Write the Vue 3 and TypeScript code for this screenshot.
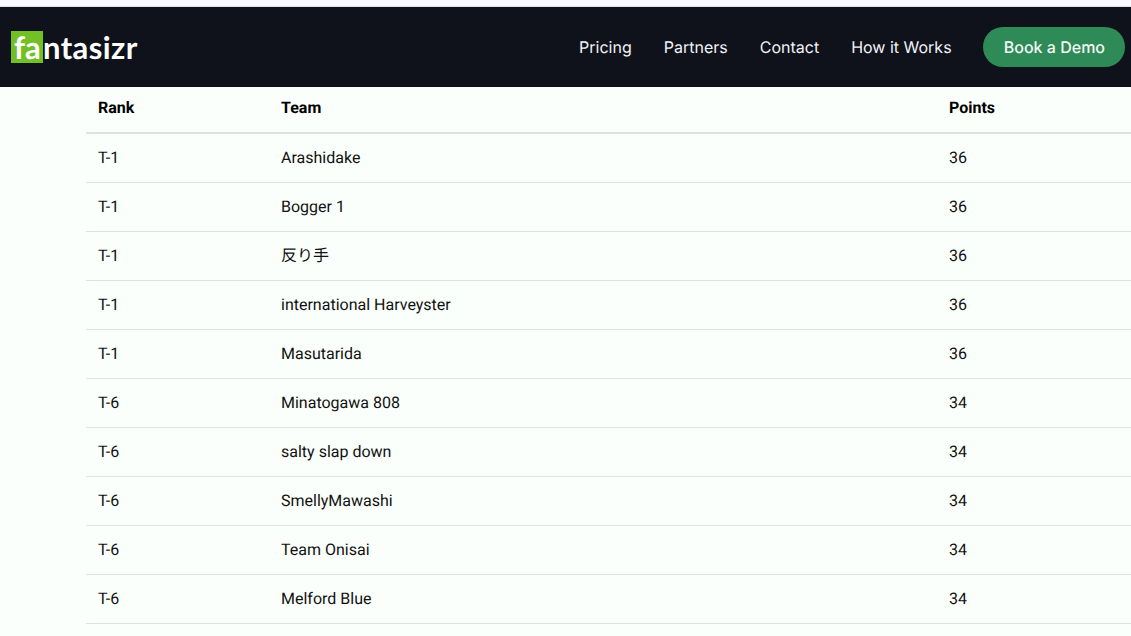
<script setup lang="ts">
interface Row { rank: string; team: string; points: number }
const links: string[] = ['Pricing', 'Partners', 'Contact', 'How it Works']
const rows: Row[] = [
  { rank: 'T-1', team: 'Arashidake', points: 36 },
  { rank: 'T-1', team: 'Bogger 1', points: 36 },
  { rank: 'T-1', team: '反り手', points: 36 },
  { rank: 'T-1', team: 'international Harveyster', points: 36 },
  { rank: 'T-1', team: 'Masutarida', points: 36 },
  { rank: 'T-6', team: 'Minatogawa 808', points: 34 },
  { rank: 'T-6', team: 'salty slap down', points: 34 },
  { rank: 'T-6', team: 'SmellyMawashi', points: 34 },
  { rank: 'T-6', team: 'Team Onisai', points: 34 },
  { rank: 'T-6', team: 'Melford Blue', points: 34 },
]
</script>

<template>
  <div class="page">
    <div class="topstrip"></div>
    <header class="nav">
      <div class="logo"><span class="logo-mark">fa</span><span>ntasizr</span></div>
      <nav class="links">
        <a v-for="l in links" :key="l" class="link">{{ l }}</a>
        <a class="cta">Book a Demo</a>
      </nav>
    </header>
    <main class="content">
      <table class="board">
        <colgroup>
          <col class="c1" />
          <col class="c2" />
          <col class="c3" />
        </colgroup>
        <thead>
          <tr><th>Rank</th><th>Team</th><th>Points</th></tr>
        </thead>
        <tbody>
          <tr v-for="(r, i) in rows" :key="i">
            <td>{{ r.rank }}</td>
            <td>{{ r.team }}</td>
            <td>{{ r.points }}</td>
          </tr>
        </tbody>
      </table>
    </main>
  </div>
</template>

<style>
html, body { margin: 0; overflow: hidden; background: #fbfffb; }
</style>

<style scoped>
.page {
  height: 636px;
  background: #fbfffb;
  font-family: Roboto, "Noto Sans CJK JP", sans-serif;
  overflow: hidden;
  text-rendering: geometricPrecision;
}
.topstrip {
  height: 6px;
  background: #f8f8ff;
  border-bottom: 1px solid #dfe0e8;
}
.nav {
  height: 80px;
  background: #10121b;
  display: flex;
  align-items: center;
  justify-content: space-between;
  padding: 0 6px 0 11px;
}
.logo {
  display: flex;
  align-items: center;
  color: #fff;
  font-family: Lato, sans-serif;
  font-size: 31px;
  font-weight: 700;
  letter-spacing: 0.4px;
  line-height: 32px;
}
.logo-mark {
  width: 32px;
  height: 32px;
  background: #72bf26;
  letter-spacing: 0;
  padding-left: 3px;
  box-sizing: border-box;
}
.links {
  display: flex;
  align-items: center;
  gap: 32px;
  font-family: Inter, sans-serif;
  font-size: 16px;
  color: #f0f4f8;
}
.cta {
  height: 40px;
  line-height: 40px;
  margin-left: -0.8px;
  padding: 0 20px 0 21px;
  border-radius: 20px;
  background: #2e8b57;
  font-weight: 500;
  color: #f4f8f6;
}
.content {
  padding-left: 86px;
}
.board {
  width: 1045px;
  table-layout: fixed;
  border-collapse: collapse;
  font-size: 16px;
  color: #111;
}
.c1 { width: 183px; }
.c2 { width: 668px; }
.c3 { width: 194px; }
th, td {
  padding: 12px;
  text-align: left;
  line-height: 24px;
}
th {
  font-weight: 700;
  height: 46px;
  padding: 8px 12px 12px;
  box-sizing: border-box;
  border-bottom: 2px solid #dee2e6;
  color: #000;
}
td {
  border-bottom: 1px solid #dee2e6;
}
</style>
